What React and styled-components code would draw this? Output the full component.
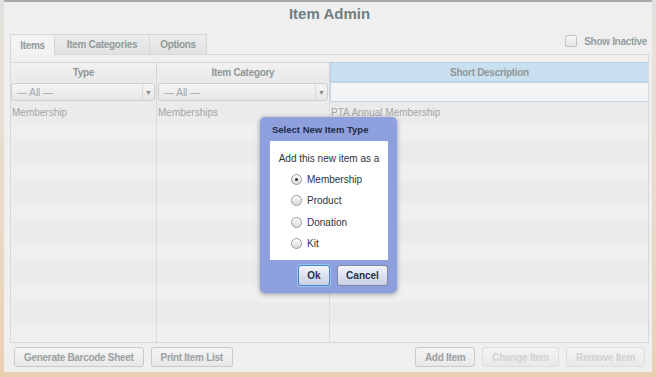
import React from "react";
import styled, { createGlobalStyle, css } from "styled-components";

const Global = createGlobalStyle`
  html, body { margin: 0; padding: 0; }
  body { font-family: "Liberation Sans", Arial, sans-serif; width: 656px; height: 377px; overflow: hidden; }
  * { box-sizing: border-box; }
`;

const Page = styled.div`
  position: relative;
  width: 656px;
  height: 377px;
  padding: 0 4px 5px 4px;
  background: linear-gradient(to bottom, #e4e2e0 0%, #e9dccd 45%, #ebcfb3 100%);
`;

const Panel = styled.div`
  height: 100%;
  display: flex;
  flex-direction: column;
  background: #efefef;
  border-top: 2px solid #a9a9a9;
  padding: 0 3px 0 6px;
`;

const Title = styled.div`
  height: 32px;
  display: flex;
  align-items: flex-start;
  justify-content: center;
  padding-top: 3px;
  font-size: 15px;
  font-weight: bold;
  color: #707e82;
`;

const TabRow = styled.div`
  display: flex;
  align-items: flex-end;
  height: 20px;
`;

const Tab = styled.div`
  width: ${(p) => p.$w}px;
  height: 20px;
  display: flex;
  align-items: center;
  justify-content: center;
  font-size: 10px;
  font-weight: bold;
  letter-spacing: -0.3px;
  color: #909a9b;
  border: 1px solid #d6d6d6;
  border-bottom: none;
  margin-left: -1px;
  ${(p) =>
    p.$active
      ? css`
          background: #f3f3f3;
          margin-left: 0;
          height: 21px;
          margin-bottom: -1px;
          position: relative;
          z-index: 1;
        `
      : css`
          background: linear-gradient(to bottom, #ececec, #e2e2e2);
        `}
`;

const Spacer = styled.div`
  flex: 1;
`;

const ShowInactive = styled.label`
  display: flex;
  align-items: center;
  gap: 7px;
  align-self: center;
  margin-right: 2px;
  margin-top: -6px;
  font-size: 10px;
  font-weight: bold;
  letter-spacing: -0.3px;
  color: #939d9e;
`;

const CheckBox = styled.span`
  width: 12px;
  height: 12px;
  border: 1px solid #c3c3c3;
  border-radius: 2px;
  background: linear-gradient(to bottom, #f6f6f6, #e7e7e7);
`;

const Pane = styled.div`
  height: 289px;
  border: 1px solid #d8d8d8;
  padding-top: 7px;
  display: flex;
  flex-direction: column;
`;

const Grid = styled.div`
  display: grid;
  grid-template-columns: 146px 173px 1fr;
`;

const HeadCell = styled.div`
  height: 20px;
  display: flex;
  align-items: center;
  justify-content: center;
  font-size: 10px;
  font-weight: bold;
  letter-spacing: -0.3px;
  color: #8f9798;
  border-top: 1px solid #d6d6d6;
  border-right: 1px solid #d6d6d6;
  background: ${(p) => (p.$sel ? "#c9e0f0" : "linear-gradient(to bottom, #f1f1f1, #e9e9e9)")};
  ${(p) => p.$sel && css`border: 1px solid #b9d3e4; border-right: none;`}
`;

const FilterCell = styled.div`
  height: 20px;
  padding: 1px 1px 1px ${(p) => (p.$first ? 0 : 1)}px;
  border-right: 1px solid #d6d6d6;
  background: #ececec;
`;

const Combo = styled.div`
  height: 18px;
  display: flex;
  align-items: center;
  border: 1px solid #cdcdcd;
  border-radius: 3px;
  background: linear-gradient(to bottom, #f5f5f5, #e6e6e6);
  font-size: 10px;
  color: #a0a6a7;
`;

const ComboText = styled.span`
  flex: 1;
  padding-left: 5px;
`;

const ComboArrow = styled.span`
  width: 12px;
  height: 100%;
  display: flex;
  align-items: center;
  justify-content: center;
  border-left: 1px solid #dadada;
  font-size: 7px;
  color: #888;
`;

const TextInput = styled.div`
  height: 20px;
  background: #f4f4f4;
  border: 1px solid #c3d9e7;
  border-right: none;
`;

const Row = styled.div`
  display: contents;
`;

const Cell = styled.div`
  height: 20px;
  display: flex;
  align-items: center;
  padding-left: 1px;
  font-size: 10px;
  color: #a2a5a6;
  background: ${(p) => (p.$odd ? "#ebebeb" : "#efefef")};
  border-right: ${(p) => (p.$last ? "none" : "1px solid #dcdcdc")};
`;

const BottomBar = styled.div`
  height: 28px;
  display: flex;
  align-items: center;
  padding: 0 4px 0 4px;
  gap: 7px;
`;

const Button = styled.div`
  height: 20px;
  padding: 0 9px;
  display: flex;
  align-items: center;
  justify-content: center;
  font-size: 10px;
  font-weight: bold;
  letter-spacing: -0.3px;
  border-radius: 3px;
  border: 1px solid ${(p) => (p.$disabled ? "#dedede" : "#c9c9c9")};
  color: ${(p) => (p.$disabled ? "#cfd3d3" : "#9aa2a3")};
  background: linear-gradient(to bottom, #f4f4f4, #e8e8e8);
  margin-left: ${(p) => (p.$push ? "auto" : "0")};
`;

const Dialog = styled.div`
  position: absolute;
  left: 260px;
  top: 117px;
  width: 137px;
  height: 176px;
  border-radius: 5px;
  background: #8d9fdc;
  box-shadow: 0 1px 5px rgba(40, 40, 60, 0.45);
  padding: 0 9px 0 10px;
  display: flex;
  flex-direction: column;
`;

const DialogTitle = styled.div`
  height: 24px;
  display: flex;
  align-items: center;
  padding-left: 2px;
  padding-top: 1px;
  font-size: 9.5px;
  font-weight: bold;
  color: #1f2c4a;
`;

const DialogBody = styled.div`
  height: 119px;
  background: #ffffff;
  padding: 12px 0 0 0;
  display: flex;
  flex-direction: column;
`;

const Prompt = styled.div`
  font-size: 10px;
  color: #2a3444;
  text-align: center;
  height: 14px;
  margin-bottom: 2px;
`;

const RadioRow = styled.div`
  display: flex;
  align-items: center;
  gap: 5px;
  height: 21.3px;
  padding-left: 21px;
  font-size: 10px;
  color: #2a3444;
`;

const Radio = styled.span`
  width: 11px;
  height: 11px;
  border-radius: 50%;
  border: 1px solid #9a9a9a;
  background: linear-gradient(to bottom, #fdfdfd, #d9d9d9);
  display: flex;
  align-items: center;
  justify-content: center;
  &::after {
    content: "";
    width: 3px;
    height: 3px;
    border-radius: 50%;
    background: ${(p) => (p.$on ? "#333" : "transparent")};
  }
`;

const DialogButtons = styled.div`
  flex: 1;
  display: flex;
  align-items: center;
  justify-content: flex-end;
  gap: 7px;
  padding-bottom: 2px;
`;

const DlgButton = styled.div`
  width: ${(p) => p.$w}px;
  height: 21px;
  display: flex;
  align-items: center;
  justify-content: center;
  font-size: 10px;
  font-weight: bold;
  color: #26324a;
  border-radius: 3px;
  border: 1px solid ${(p) => (p.$focus ? "#3f86cf" : "#7e88a0")};
  background: linear-gradient(to bottom, #f2f4fa, #c9d0e3);
  box-shadow: ${(p) => (p.$focus ? "0 0 0 1px #9cc4ec" : "none")};
`;

const rows = Array.from({ length: 12 }, (_, i) =>
  i === 0 ? ["Membership", "Memberships", "PTA Annual Membership"] : ["", "", ""]
);

export default function App() {
  return (
    <>
      <Global />
      <Page>
        <Panel>
          <Title>Item Admin</Title>
          <TabRow>
            <Tab $w={45} $active>Items</Tab>
            <Tab $w={96}>Item Categories</Tab>
            <Tab $w={58}>Options</Tab>
            <Spacer />
            <ShowInactive>
              <CheckBox />
              Show Inactive
            </ShowInactive>
          </TabRow>
          <Pane>
            <Grid>
              <HeadCell>Type</HeadCell>
              <HeadCell>Item Category</HeadCell>
              <HeadCell $sel>Short Description</HeadCell>
              <FilterCell $first>
                <Combo>
                  <ComboText>— All —</ComboText>
                  <ComboArrow>▼</ComboArrow>
                </Combo>
              </FilterCell>
              <FilterCell>
                <Combo>
                  <ComboText>— All —</ComboText>
                  <ComboArrow>▼</ComboArrow>
                </Combo>
              </FilterCell>
              <TextInput />
              {rows.map((r, i) => (
                <Row key={i}>
                  <Cell $odd={i % 2 === 0}>{r[0]}</Cell>
                  <Cell $odd={i % 2 === 0}>{r[1]}</Cell>
                  <Cell $odd={i % 2 === 0} $last>{r[2]}</Cell>
                </Row>
              ))}
            </Grid>
          </Pane>
          <BottomBar>
            <Button>Generate Barcode Sheet</Button>
            <Button>Print Item List</Button>
            <Button $push>Add Item</Button>
            <Button $disabled>Change Item</Button>
            <Button $disabled>Remove Item</Button>
          </BottomBar>
        </Panel>
        <Dialog>
          <DialogTitle>Select New Item Type</DialogTitle>
          <DialogBody>
            <Prompt>Add this new item as a</Prompt>
            <RadioRow><Radio $on />Membership</RadioRow>
            <RadioRow><Radio />Product</RadioRow>
            <RadioRow><Radio />Donation</RadioRow>
            <RadioRow><Radio />Kit</RadioRow>
          </DialogBody>
          <DialogButtons>
            <DlgButton $w={32} $focus>Ok</DlgButton>
            <DlgButton $w={51}>Cancel</DlgButton>
          </DialogButtons>
        </Dialog>
      </Page>
    </>
  );
}
